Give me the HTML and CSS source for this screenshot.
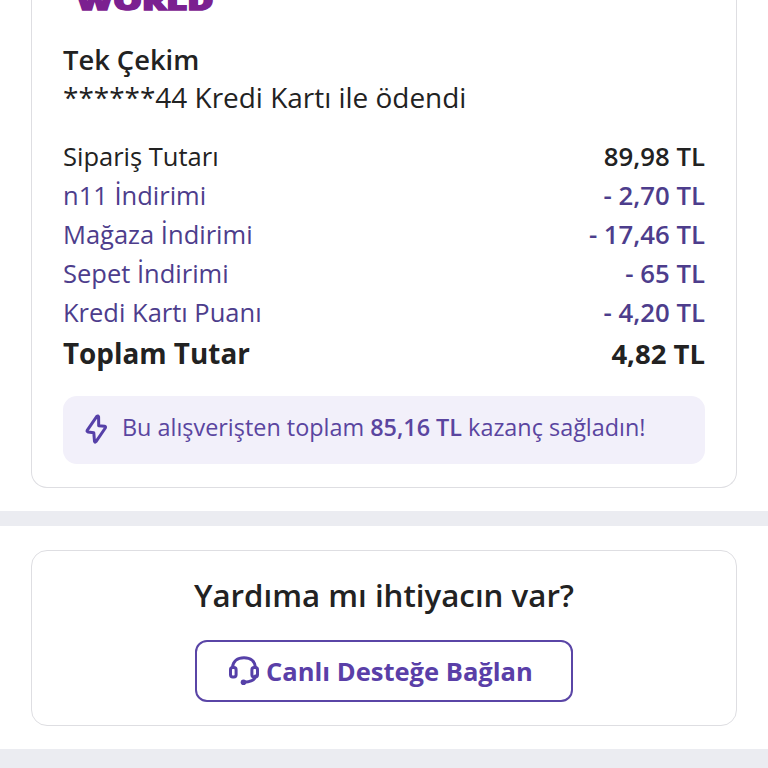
FILE: index.html
```html
<!DOCTYPE html>
<html lang="tr">
<head>
<meta charset="utf-8">
<title>Sipariş Detayı</title>
<link rel="stylesheet" href="styles.css">
</head>
<body>
<section class="panel payment">
  <div class="card summary">
    <div class="brand"><span>WORLD</span></div>
    <h2 class="method">Tek Çekim</h2>
    <p class="paid">******44 Kredi Kartı ile ödendi</p>
    <dl class="rows">
      <div class="row"><dt>Sipariş Tutarı</dt><dd>89,98 TL</dd></div>
      <div class="row discount"><dt>n11 İndirimi</dt><dd>- 2,70 TL</dd></div>
      <div class="row discount"><dt>Mağaza İndirimi</dt><dd>- 17,46 TL</dd></div>
      <div class="row discount"><dt>Sepet İndirimi</dt><dd>- 65 TL</dd></div>
      <div class="row discount"><dt>Kredi Kartı Puanı</dt><dd>- 4,20 TL</dd></div>
      <div class="row total"><dt>Toplam Tutar</dt><dd>4,82 TL</dd></div>
    </dl>
    <div class="savings">
      <svg class="bolt" viewBox="0 0 24 32"><path d="M12.8 2.4 L3.2 16.4 Q2.6 17.7 4 18 L9.8 18.8 L10.5 27.4 Q10.9 28.8 12 27.6 L21.3 14 Q22 12.6 20.6 12.3 L14.7 11.8 L14.6 3 Q14.1 1.2 12.8 2.4 Z"/></svg>
      <p>Bu alışverişten toplam <b>85,16 TL</b> kazanç sağladın!</p>
    </div>
  </div>
</section>
<section class="panel help">
  <div class="card support">
    <h2 class="question">Yardıma mı ihtiyacın var?</h2>
    <button class="connect">
      <svg class="headset" viewBox="0 0 32 32"><path d="M4.5 12.5C5 6 9.6 2.7 16 2.7S27 6 27.5 12.5M27.5 21C27 25 23 27 16 27.2"/><rect x="2.5" y="12.5" width="5.6" height="9.4" rx="2.2"/><rect x="23.9" y="12.5" width="5.6" height="9.4" rx="2.2"/><circle class="mic" cx="15.5" cy="27.2" r="2.8"/></svg>
      <span>Canlı Desteğe Bağlan</span>
    </button>
  </div>
</section>
</body>
</html>
```
FILE: styles.css
```css
* { box-sizing: border-box; margin: 0; }
body { height: 768px; overflow: hidden; background: #ebecf1; font-family: "Open Sans", sans-serif; color: #222; }
.panel { background: #fff; padding: 0 31px; }
.payment { height: 511px; }
.help { height: 223px; margin-top: 15px; padding-top: 24px; }
.card { border: 1px solid #dedee2; border-radius: 16px; }
.summary { height: 488px; border-top: 0; border-radius: 0 0 16px 16px; padding: 0 31px; }
.brand { height: 41px; padding-left: 13px; line-height: 0; font-size: 27px; font-weight: 800; color: #7b2090; }
.brand span { display: inline-block; line-height: 1px; transform: translateY(-1.5px) scaleX(1.33); transform-origin: left; -webkit-text-stroke: 1.6px #7b2090; }
.method { height: 37px; line-height: 38px; font-size: 27.3px; font-weight: 600; }
.paid { height: 39px; line-height: 38px; font-size: 27.95px; }
.rows { padding-top: 20px; }
.row { display: flex; justify-content: space-between; height: 39px; line-height: 39px; font-size: 25.5px; }
dd { font-size: 25.75px; font-weight: 600; }
.discount { color: #4d3d8c; }
.total { height: 43px; line-height: 43px; font-size: 27.85px; font-weight: 700; }
.total dd { font-size: 27.5px; font-weight: 700; }
.savings { display: flex; align-items: center; height: 68px; margin-top: 21px; padding-left: 21px; border-radius: 14px; background: #f2f0fa; color: #5a45a0; font-size: 23.4px; }
.savings p { margin-top: -6px; white-space: nowrap; }
.bolt { width: 24px; height: 32px; margin-right: 14px; }
.savings b { font-weight: 600; }
svg { fill: none; stroke: #5640a8; stroke-width: 3; stroke-linejoin: round; stroke-linecap: round; }
.mic { fill: #5640a8; stroke: none; }
.support { height: 176px; display: flex; flex-direction: column; align-items: center; padding-top: 24px; }
.question { height: 65px; line-height: 40px; font-size: 31.25px; font-weight: 600; }
.connect { display: flex; align-items: center; justify-content: flex-start; gap: 6px; width: 378px; height: 62px; padding: 0 0 0 31px; border: 2px solid #5a45a6; border-radius: 12px; background: #fff; color: #5a3fa8; font: 700 25.55px "Open Sans", sans-serif; }
.headset { width: 32px; height: 32px; }
```
